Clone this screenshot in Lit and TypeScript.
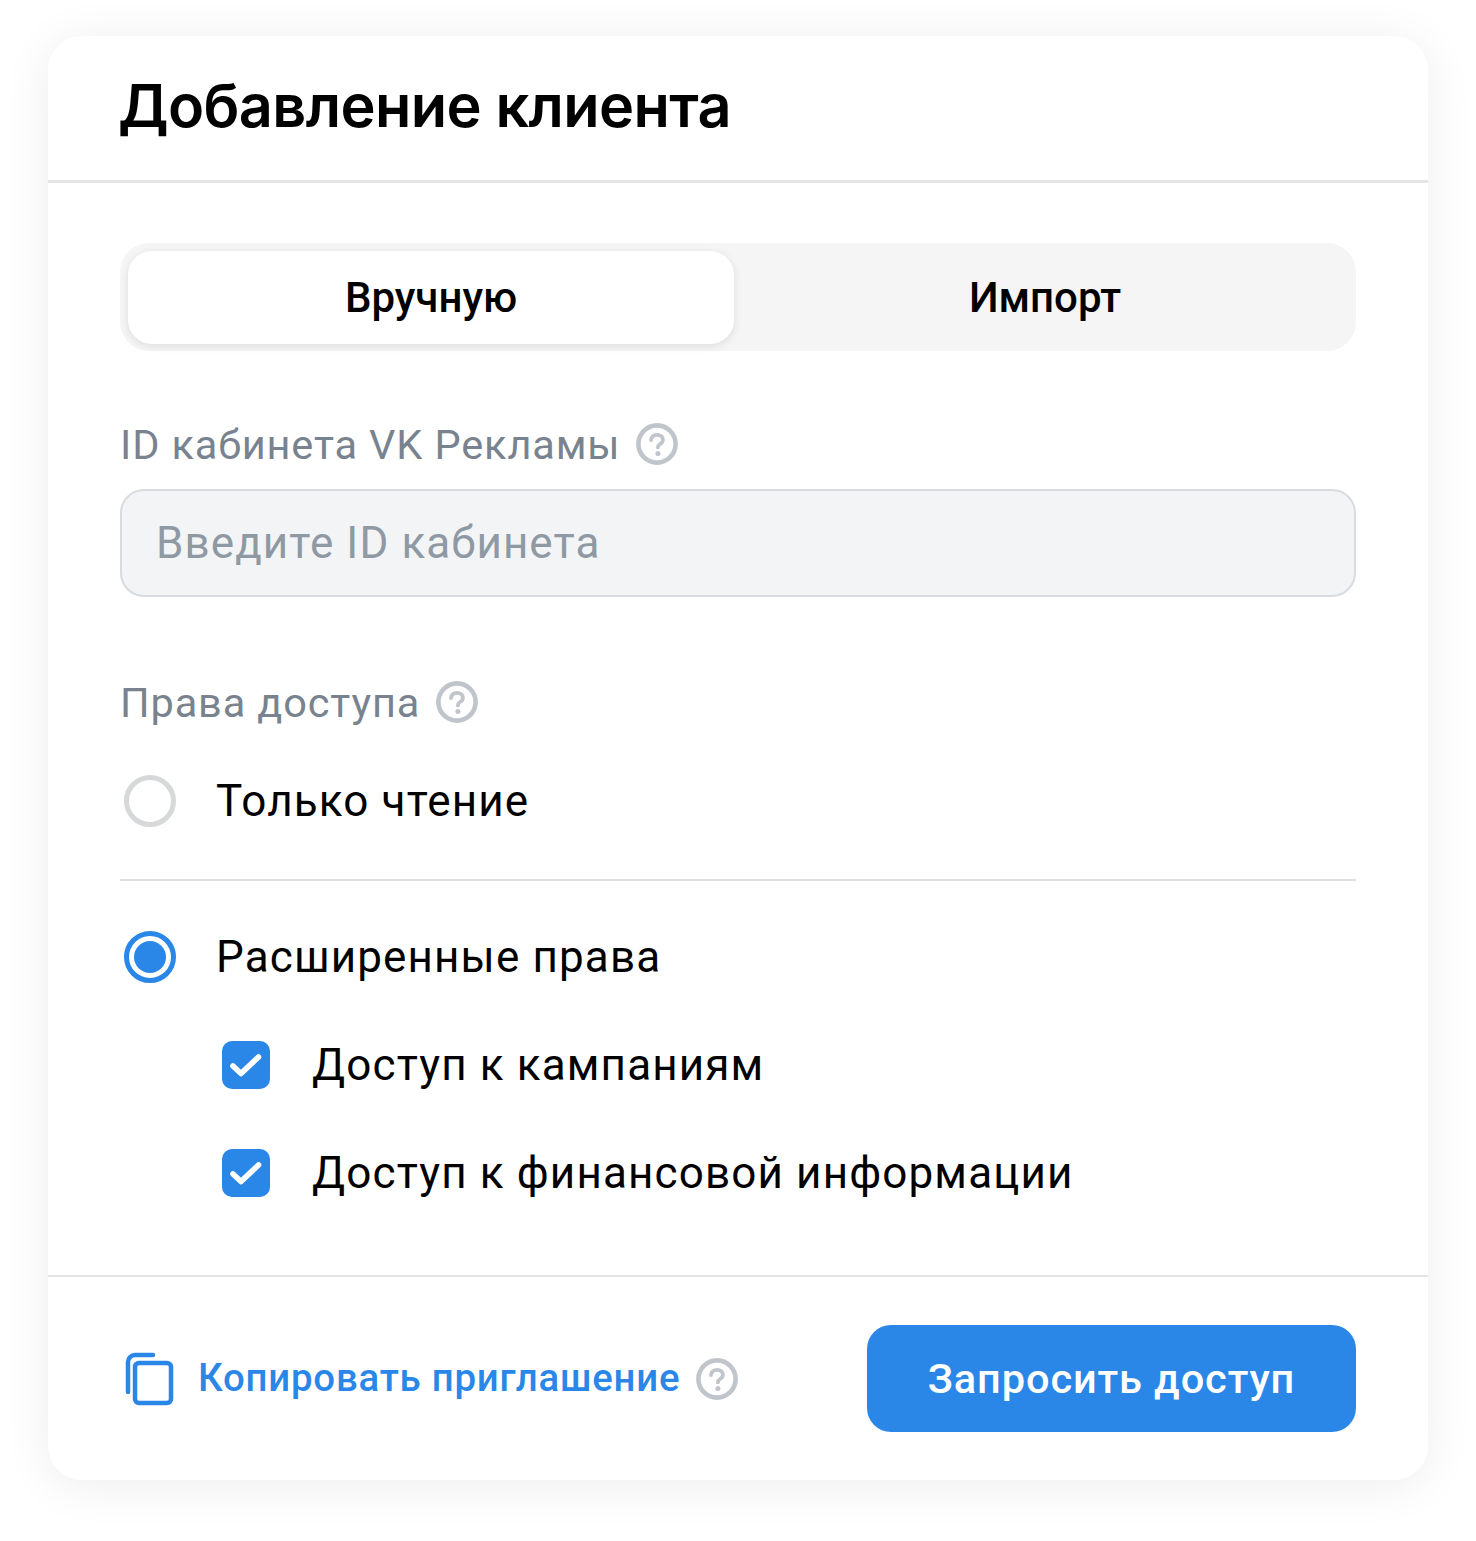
import { LitElement, html, css, svg } from "lit";
import { customElement } from "lit/decorators.js";

const help = html`<svg class="help" viewBox="0 0 42 42" aria-hidden="true">
  <circle cx="21" cy="21" r="18.6" fill="none" stroke="#c0c5cc" stroke-width="4.6"/>
  <path d="M15 17.2c.2-3.4 2.7-5.4 6-5.4 3.4 0 5.9 2 5.9 4.9 0 2-1 3.2-2.8 4.3-1.6 1-2.2 1.7-2.2 3.4" fill="none" stroke="#c0c5cc" stroke-width="3.8" stroke-linecap="round"/>
  <circle cx="21.9" cy="30.4" r="2.5" fill="#c0c5cc"/>
</svg>`;

const check = svg`<path d="M11 25l8 7.5L36.5 16" fill="none" stroke="#fff" stroke-width="5.6" stroke-linecap="round" stroke-linejoin="round"/>`;

@customElement("app-root")
export class AppRoot extends LitElement {
  static styles = css`
    :host { display: block; width: 1476px; height: 1541px; background: #fff; font-family: Roboto, "Noto Sans", sans-serif; color: #000; padding: 36px 48px 0; box-sizing: border-box; }
    .card { width: 1380px; height: 1444px; background: #fff; border-radius: 34px; box-shadow: 0 5px 48px rgba(0,0,0,.075); display: flex; flex-direction: column; box-sizing: border-box; }
    .head { height: 147px; box-sizing: border-box; border-bottom: 3px solid #e3e4e6; padding: 0 70px; display: flex; align-items: center; }
    h1 { margin: 0 0 6px; font-family: Inter, sans-serif; font-size: 59.4px; font-weight: 600; letter-spacing: -0.6px; line-height: 68px; }
    .body { flex: 1; padding: 60px 72px 0; display: flex; flex-direction: column; }
    .tabs { height: 108px; border-radius: 29px; background: #f5f5f5; padding: 8px 8px 7px; box-sizing: border-box; display: grid; grid-template-columns: 606px 1fr; font-size: 42px; font-weight: 500; }
    .tab { display: flex; align-items: center; justify-content: center; }
    .tab.on { background: #fff; border-radius: 24px; box-shadow: 0 2px 9px rgba(0,0,0,.1); }
    .tab.off { padding-left: 8px; }
    .label { display: flex; align-items: center; gap: 16px; color: #78838f; font-size: 41.5px; letter-spacing: 0.87px; height: 48px; }
    .l1 { margin-top: 69px; }
    .l2 { margin-top: 81px; }
    .help { width: 42px; height: 42px; flex: none; }
    .input { margin-top: 21px; height: 108px; box-sizing: border-box; background: #f2f4f6; border: 2px solid #d8dbdf; border-radius: 24px; padding: 0 34px 0; display: flex; align-items: center; color: #8f99a4; font-size: 44px; letter-spacing: 1.1px; }
    .row { display: flex; align-items: center; font-size: 44px; letter-spacing: 1.15px; }
    .radio { width: 52px; height: 52px; border-radius: 50%; box-sizing: border-box; margin: 0 40px 0 4px; flex: none; }
    .radio.off { border: 5px solid #d6d8da; }
    .radio.on { border: 5px solid #2a87e8; display: flex; align-items: center; justify-content: center; }
    .dot { width: 32px; height: 32px; border-radius: 50%; background: #2a87e8; }
    .r1 { height: 52px; margin-top: 49px; }
    .sep { height: 2px; background: #dcdee0; margin-top: 52px; }
    .r2 { height: 52px; margin-top: 50px; }
    .sub { height: 48px; padding-left: 102px; }
    .s1 { margin-top: 58px; }
    .s2 { margin-top: 60px; }
    .cb { width: 48px; height: 48px; margin-right: 42px; flex: none; }
    .foot { height: 205px; box-sizing: border-box; border-top: 2px solid #e3e4e6; padding: 48px 72px 0; display: flex; justify-content: space-between; align-items: flex-start; }
    .copy { display: flex; align-items: center; height: 107px; color: #2a87e8; font-size: 38.4px; font-weight: 500; letter-spacing: 0.78px; }
    .copy .ic { width: 50px; height: 54px; margin: 0 24px 0 4px; flex: none; }
    .copy .txt { margin-bottom: 2px; }
    .copy .help { margin-left: 16px; }
    .btn { width: 489px; height: 107px; border-radius: 24px; background: #2a87e8; color: #fff; font-size: 41.5px; font-weight: 500; letter-spacing: 0.9px; display: flex; align-items: center; justify-content: center; }
  `;

  private box() {
    return html`<svg class="cb" viewBox="0 0 48 48" aria-hidden="true"><rect width="48" height="48" rx="10" fill="#2a87e8"/>${check}</svg>`;
  }

  render() {
    return html`<section class="card">
      <header class="head"><h1>Добавление клиента</h1></header>
      <div class="body">
        <div class="tabs">
          <div class="tab on">Вручную</div>
          <div class="tab off">Импорт</div>
        </div>
        <div class="label l1">ID кабинета VK Рекламы ${help}</div>
        <div class="input">Введите ID кабинета</div>
        <div class="label l2">Права доступа ${help}</div>
        <div class="row r1"><span class="radio off"></span>Только чтение</div>
        <div class="sep"></div>
        <div class="row r2"><span class="radio on"><span class="dot"></span></span>Расширенные права</div>
        <div class="row sub s1">${this.box()}Доступ к кампаниям</div>
        <div class="row sub s2">${this.box()}Доступ к финансовой информации</div>
      </div>
      <footer class="foot">
        <div class="copy">
          <svg class="ic" viewBox="0 0 50 54" aria-hidden="true" fill="none" stroke="#2a87e8" stroke-width="4.5">
            <rect x="11" y="11" width="36" height="40" rx="4"/>
            <path d="M4 40V10a7 7 0 0 1 7-7h18" stroke-linecap="round"/>
          </svg>
          <span class="txt">Копировать приглашение</span> ${help}
        </div>
        <div class="btn">Запросить доступ</div>
      </footer>
    </section>`;
  }
}
